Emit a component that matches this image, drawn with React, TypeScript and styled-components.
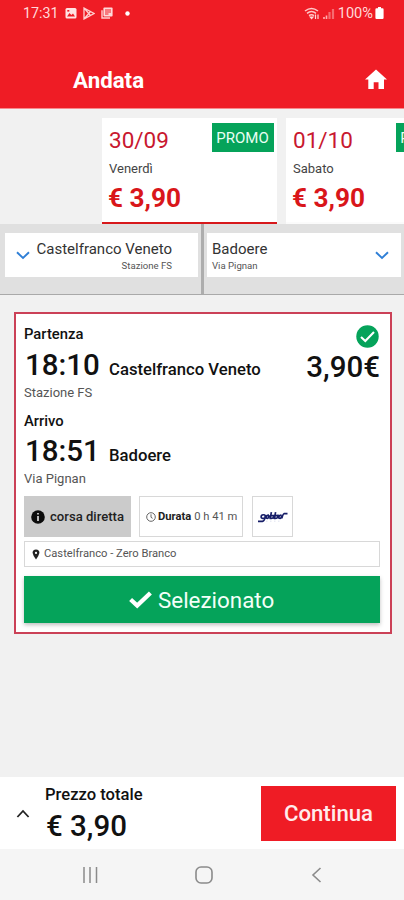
import React from "react";
import styled, { createGlobalStyle } from "styled-components";

const Global = createGlobalStyle`
  * { box-sizing: border-box; }
  body { margin: 0; background: #f1f1f1; font-family: Roboto, "Liberation Sans", sans-serif; }
`;

const Screen = styled.div`
  width: 404px;
  height: 900px;
  display: flex;
  flex-direction: column;
  overflow: hidden;
  background: #f1f1f1;
`;

const Text = styled.span<{
  $size: number;
  $line: number;
  $weight?: number;
  $color?: string;
  $track?: number;
}>`
  display: block;
  white-space: nowrap;
  font-size: ${(p) => p.$size}px;
  line-height: ${(p) => p.$line}px;
  font-weight: ${(p) => p.$weight ?? 400};
  color: ${(p) => p.$color ?? "#111"};
  letter-spacing: ${(p) => p.$track ?? 0}px;
`;

const Header = styled.header`
  height: 109px;
  flex: none;
  background: #ef1c25;
  border-bottom: 1px solid #f7898c;
`;

const StatusBar = styled.div`
  height: 26px;
  padding: 0 20px 0 23px;
  display: flex;
  justify-content: space-between;
  align-items: center;
`;

const StatusGroup = styled.div<{ $gap: number }>`
  display: flex;
  align-items: center;
  gap: ${(p) => p.$gap}px;
`;

const TitleBar = styled.div`
  height: 82px;
  padding: 25px 17px 0 73px;
  display: flex;
  justify-content: space-between;
  align-items: flex-start;
`;

const HomeIcon = styled.svg`
  margin-top: 18px;
`;

const Dates = styled.div`
  height: 115px;
  flex: none;
  padding: 9px 0 0 102px;
  display: flex;
  gap: 9px;
  overflow: hidden;
`;

const DateCard = styled.div<{ $active?: boolean }>`
  width: 175px;
  height: 106px;
  flex: none;
  padding: 5px 3.5px 0 6px;
  background: #fff;
  border-bottom: ${(p) => (p.$active ? "2px solid #d7191c" : "2px solid #fbfbfb")};
`;

const DateTop = styled.div`
  display: flex;
  justify-content: space-between;
  height: 36px;
  padding-left: 1px;
`;

const DayName = styled.div`
  padding-left: 1px;
`;

const Promo = styled.div`
  width: 62px;
  height: 29px;
  display: flex;
  justify-content: center;
  background: #05a35a;
`;

const Stops = styled.div`
  height: 71px;
  flex: none;
  display: grid;
  grid-template-columns: 201px 3px 200px;
  background: #e0e0e0;
  border-bottom: 1px solid #a9a9a9;
`;

const Divider = styled.div`
  background: #adadad;
`;

const Stop = styled.div<{ $end?: boolean }>`
  height: 44px;
  margin: ${(p) => (p.$end ? "9px 3px 0 3px" : "9px 3px 0 5px")};
  padding: ${(p) => (p.$end ? "6px 12px 0 5px" : "6px 26px 0 11px")};
  display: flex;
  justify-content: space-between;
  background: #fff;
`;

const StopName = styled.div<{ $right?: boolean }>`
  display: flex;
  flex-direction: column;
  align-items: ${(p) => (p.$right ? "flex-end" : "flex-start")};
`;

const DownIcon = styled.svg`
  margin-top: 12px;
`;

const Content = styled.main`
  flex: 1;
  padding: 17px 12px 0 14px;
`;

const Ticket = styled.section`
  height: 322px;
  padding: 10px 10px 0 8px;
  border: 2px solid #cb4157;
  background: #fff;
`;

const TicketTop = styled.div`
  height: 24px;
  display: flex;
  justify-content: space-between;
`;

const CheckCircle = styled.svg`
  margin: 1px 1px 0 0;
`;

const Arrival = styled.div`
  padding-top: 10px;
`;

const TimeRow = styled.div<{ $height: number }>`
  height: ${(p) => p.$height}px;
  display: flex;
  align-items: flex-start;
`;

const Time = styled.div`
  width: 85px;
  padding-left: 1px;
`;

const Price = styled.div`
  margin-left: auto;
`;

const Tags = styled.div`
  margin-top: 8px;
  height: 41px;
  display: flex;
`;

const Tag = styled.div<{ $width: number; $left?: number; $filled?: boolean; $indent?: number }>`
  width: ${(p) => p.$width}px;
  margin-left: ${(p) => p.$left ?? 0}px;
  padding-left: ${(p) => p.$indent ?? 6}px;
  display: flex;
  align-items: center;
  border: 1px solid ${(p) => (p.$filled ? "#cbcbcb" : "#d8d8d8")};
  background: ${(p) => (p.$filled ? "#cbcbcb" : "#fff")};
`;

const Space = styled.i<{ $w: number }>`
  flex: none;
  width: ${(p) => p.$w}px;
`;

const Line = styled.div`
  height: 26px;
  margin-top: 4px;
  padding-left: 6px;
  display: flex;
  align-items: center;
  border: 1px solid #d8d8d8;
`;

const SelectedButton = styled.button`
  width: 100%;
  height: 47px;
  margin-top: 9px;
  padding: 1px 0 0 105px;
  display: flex;
  align-items: center;
  border: 0;
  font-family: inherit;
  background: #05a35a;
  box-shadow: 0 2px 4px rgba(0, 0, 0, 0.25);
`;

const Footer = styled.footer`
  height: 72px;
  flex: none;
  padding: 0 8px 0 16px;
  display: flex;
  background: #fff;
`;

const UpIcon = styled.svg`
  margin: 32px 15px 0 0;
`;

const Total = styled.div`
  padding-top: 6px;
`;

const Amount = styled.div`
  padding-left: 1px;
`;

const ContinueButton = styled.button`
  width: 135px;
  height: 55px;
  margin: 9px 0 0 auto;
  padding: 0;
  display: flex;
  justify-content: center;
  align-items: center;
  border: 0;
  font-family: inherit;
  background: #ef1c25;
`;

const SystemNav = styled.nav`
  height: 51px;
  flex: none;
  padding: 0 78px 0 81px;
  display: flex;
  justify-content: space-between;
  align-items: center;
  background: #f5f5f5;
`;

const Day = ({ date, day, active }: { date: string; day: string; active?: boolean }) => (
  <DateCard $active={active}>
    <DateTop>
      <Text $size={22.5} $line={35} $color="#c8182f">{date}</Text>
      <Promo><Text $size={15} $line={30} $color="#e9fff3">PROMO</Text></Promo>
    </DateTop>
    <DayName><Text $size={13} $line={19} $color="#444">{day}</Text></DayName>
    <Text $size={26.2} $line={40} $weight={700} $color="#d9161a">€ 3,90</Text>
  </DateCard>
);

const Chevron = () => (
  <DownIcon width="14" height="9" viewBox="0 0 14 9" fill="none" stroke="#2f7fd6" strokeWidth="1.9">
    <path d="M1 1.3 L7 7 L13 1.3" />
  </DownIcon>
);

export default function App() {
  return (
    <>
      <Global />
      <Screen>
        <Header>
          <StatusBar>
            <StatusGroup $gap={6}>
              <Text $size={14.3} $line={26} $color="#ffd9d9">17:31</Text>
              <svg width="12" height="12" viewBox="0 0 12 12">
                <rect x="0.5" y="1" width="11" height="10.5" rx="1.5" fill="#ffe3e3" />
                <path d="M2 9.5 L4.5 6 L6.3 8 L8 6.5 L10 9.5Z" fill="#ef1c25" />
                <rect x="2.3" y="3" width="2" height="1.6" fill="#ef1c25" />
              </svg>
              <svg width="12" height="13" viewBox="0 0 12 13" fill="none" stroke="#ffd0d0" strokeWidth="1.3">
                <path d="M1 1 L11 6.5 L1 12Z M1 1 L7.5 8.5 M1 12 L7.5 4.5" />
              </svg>
              <svg width="12" height="12" viewBox="0 0 12 12">
                <path d="M1 3.2 V11 H9" fill="none" stroke="#ffd0d0" strokeWidth="1.4" />
                <rect x="2.4" y="0.6" width="9.2" height="9" rx="1" fill="#ffd9d9" />
                <path d="M4 3 H10 M4 5 H10 M4 7 H7.5" stroke="#ef1c25" strokeWidth="1" />
              </svg>
              <Space $w={-3} />
              <svg width="5" height="5" viewBox="0 0 5 5"><circle cx="2.5" cy="2.5" r="2.2" fill="#fff" /></svg>
            </StatusGroup>
            <StatusGroup $gap={2}>
              <svg width="32" height="13" viewBox="0 0 32 13" fill="none">
                <path d="M1 4 Q7.5 -1 14 4 M3 6.3 Q7.5 2.8 12 6.3 M5 8.6 Q7.5 6.8 10 8.6" stroke="#ffc9c9" strokeWidth="1.5" />
                <path d="M6.3 10 H9 L7.6 11.6Z M11.5 7.5 V12 M14 7.5 V12" stroke="#ffd9d9" strokeWidth="1.2" />
                <path d="M20 12 V10 M22.5 12 V8.5" stroke="#ffb0b0" strokeWidth="1.6" />
                <path d="M25.5 12 V5 M29 12 V2" stroke="#f66b70" strokeWidth="2.2" />
              </svg>
              <Text $size={14.6} $line={26} $color="#ffd9d9">100%</Text>
              <svg width="9" height="12" viewBox="0 0 9 12">
                <path d="M3 0 H6 V1.3 H7.5 Q8.6 1.3 8.6 2.5 V10.8 Q8.6 12 7.5 12 H1.5 Q0.4 12 0.4 10.8 V2.5 Q0.4 1.3 1.5 1.3 H3Z" fill="#fff" />
              </svg>
            </StatusGroup>
          </StatusBar>
          <TitleBar>
            <Text $size={22.3} $line={59} $weight={700} $color="#fff">Andata</Text>
            <HomeIcon width="22" height="21" viewBox="0 0 22 21">
              <path d="M11 0.5 L22 10.5 H19 V20 H13.5 V13.2 H8.7 V20 H3.3 V10.5 H0Z" fill="#fff" />
            </HomeIcon>
          </TitleBar>
        </Header>

        <Dates>
          <Day date="30/09" day="Venerdì" active />
          <Day date="01/10" day="Sabato" />
        </Dates>

        <Stops>
          <Stop>
            <Chevron />
            <StopName $right>
              <Text $size={15} $line={21} $color="#333">Castelfranco Veneto</Text>
              <Text $size={9.6} $line={12} $color="#555">Stazione FS</Text>
            </StopName>
          </Stop>
          <Divider />
          <Stop $end>
            <StopName>
              <Text $size={15} $line={21} $color="#333">Badoere</Text>
              <Text $size={9.6} $line={12} $color="#555">Via Pignan</Text>
            </StopName>
            <Chevron />
          </Stop>
        </Stops>

        <Content>
          <Ticket>
            <TicketTop>
              <Text $size={14.8} $line={21} $weight={500}>Partenza</Text>
              <CheckCircle width="23" height="23" viewBox="0 0 23 23">
                <circle cx="11.5" cy="11.5" r="11.2" fill="#05a35a" />
                <path d="M5 12 L9.3 16 L18 7" fill="none" stroke="#fff" strokeWidth="2.1" />
              </CheckCircle>
            </TicketTop>
            <TimeRow $height={36}>
              <Time><Text $size={29.5} $line={34} $weight={500}>18:10</Text></Time>
              <Text $size={16.7} $line={43} $weight={500}>Castelfranco Veneto</Text>
              <Price><Text $size={29.5} $line={38} $weight={500}>3,90€</Text></Price>
            </TimeRow>
            <Text $size={13} $line={17} $color="#555">Stazione FS</Text>
            <Arrival>
              <Text $size={14.8} $line={20} $weight={500}>Arrivo</Text>
              <TimeRow $height={39}>
                <Time><Text $size={29.5} $line={41} $weight={500}>18:51</Text></Time>
                <Text $size={16.7} $line={49} $weight={500}>Badoere</Text>
              </TimeRow>
              <Text $size={13} $line={18} $color="#555">Via Pignan</Text>
            </Arrival>

            <Tags>
              <Tag $width={107} $filled>
                <svg width="14" height="14" viewBox="0 0 14 14">
                  <circle cx="7" cy="7" r="6.8" fill="#0b0b0b" />
                  <path d="M7 3 V4.6 M7 6 V11" stroke="#cbcbcb" strokeWidth="1.8" />
                </svg>
                <Space $w={5} />
                <Text $size={13.1} $line={40} $weight={500} $color="#222">corsa diretta</Text>
              </Tag>
              <Tag $width={104} $left={8}>
                <svg width="10" height="10" viewBox="0 0 10 10" fill="none" stroke="#555" strokeWidth="0.9">
                  <circle cx="5" cy="5" r="4.3" /><path d="M5 2.3 V5.3 L6.6 6.3" />
                </svg>
                <Space $w={2} />
                <Text $size={11.2} $line={40} $weight={700} $color="#222">Durata</Text>
                <Space $w={3} />
                <Text $size={11.2} $line={40} $color="#555">0 h 41 m</Text>
              </Tag>
              <Tag $width={41} $left={9} $indent={4}>
                <svg width="32" height="16" viewBox="0 0 32 16" fill="none" stroke="#171e68">
                  <path d="M1 12.3 H5.5 Q8 12 8.3 5.7 M8 6 Q4.2 5 4.1 8 Q4.2 10 7.5 9 M12 6.2 Q8.8 6.2 9.2 9 Q11.8 10.3 12.2 6.2 M14.4 3.2 L13.2 9.3 Q17 9.8 16.8 6.5 L14 6.6 M18.6 3.2 L17.4 9.3 Q21.2 9.8 21 6.5 L18.2 6.6 M24.5 6.2 Q21.6 6.2 21.8 9 Q24.7 10.3 24.8 6.2 L24.8 9.2 Q26 5 27 4.7 H30.5" strokeWidth="1.7" />
                  <path d="M9 12.2 H24" stroke="#d3d6e8" strokeWidth="0.7" strokeDasharray="1.5 2.5" />
                </svg>
              </Tag>
            </Tags>

            <Line>
              <svg width="10" height="11" viewBox="0 0 10 11">
                <path d="M5 0.5 Q8.5 0.7 8.4 4 Q8 6.4 5 10.5 Q2 6.4 1.6 4 Q1.5 0.7 5 0.5Z" fill="#222" />
                <circle cx="5" cy="3.9" r="1.1" fill="#fff" />
              </svg>
              <Space $w={3} />
              <Text $size={11.2} $line={24} $color="#555">Castelfranco - Zero Branco</Text>
            </Line>

            <SelectedButton>
              <svg width="23" height="18" viewBox="0 0 23 18" fill="none" stroke="#fff" strokeWidth="4.3">
                <path d="M1.6 8.5 L8.2 14.5 L21.4 2" />
              </svg>
              <Space $w={6} />
              <Text $size={22.4} $line={47} $color="#f2fff8">Selezionato</Text>
            </SelectedButton>
          </Ticket>
        </Content>

        <Footer>
          <UpIcon width="14" height="9" viewBox="0 0 14 9" fill="none" stroke="#222" strokeWidth="1.8">
            <path d="M1.4 8 L7 2 L12.6 8" />
          </UpIcon>
          <Total>
            <Text $size={16.6} $line={24} $weight={500}>Prezzo totale</Text>
            <Amount><Text $size={29.5} $line={38} $weight={500}>€ 3,90</Text></Amount>
          </Total>
          <ContinueButton>
            <Text $size={22.2} $line={55} $weight={500} $color="#ffecec">Continua</Text>
          </ContinueButton>
        </Footer>

        <SystemNav>
          <svg width="18" height="18" viewBox="0 0 18 18" stroke="#8b8b8b" strokeWidth="1.5">
            <path d="M3 1 V17 M9 1 V17 M15.5 1 V17" />
          </svg>
          <svg width="18" height="18" viewBox="0 0 18 18" fill="none" stroke="#8b8b8b" strokeWidth="1.6">
            <rect x="1" y="1" width="16" height="16" rx="5" />
          </svg>
          <svg width="18" height="18" viewBox="0 0 18 18" fill="none" stroke="#8b8b8b" strokeWidth="1.6">
            <path d="M12.5 2 L5 9 L12.5 16" />
          </svg>
        </SystemNav>
      </Screen>
    </>
  );
}
